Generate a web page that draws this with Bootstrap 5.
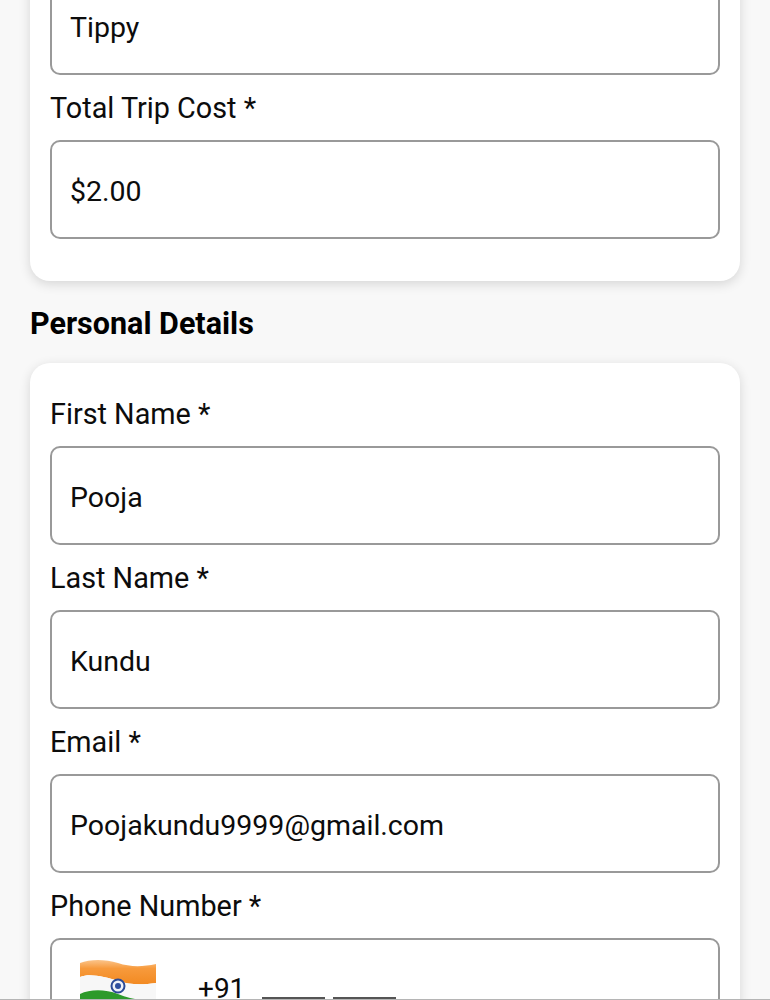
<!DOCTYPE html>
<html lang="en">

<head>
    <meta charset="UTF-8">
    <meta name="viewport" content="width=device-width, initial-scale=1.0">
    <title>Trip Details</title>
    <link rel="stylesheet" href="https://cdn.jsdelivr.net/npm/bootstrap@5.3.0/dist/css/bootstrap.min.css">
    <style>
        html, body {
            height: 1000px;
            overflow: hidden;
        }

        body {
            background-color: #f8f8f8;
            color: #0c0c0c;
            font-family: Roboto, "Liberation Sans", sans-serif;
        }

        /* thin line along the bottom of the screen */
        body::after {
            content: "";
            position: fixed;
            left: 0;
            right: 0;
            bottom: 0;
            height: 1px;
            background-color: #b5b5b5;
        }

        .page-wrap {
            margin-top: -107px;
            padding: 0 30px;
        }

        .form-panel {
            background-color: #fff;
            border-radius: 20px;
            padding: 34px 20px 42px;
            box-shadow: 0 3px 12px rgba(0, 0, 0, 0.14);
        }

        .panel-title {
            font-size: 30.5px;
            font-weight: 700;
            color: #000;
            line-height: 40px;
            margin: 23px 0 19px;
        }

        .field-label {
            display: block;
            font-size: 28.8px;
            line-height: 33px;
            padding-top: 1px;
            margin: 0 0 15px;
        }

        .field-box {
            height: 99px;
            border: 2px solid #999;
            border-radius: 10px;
            padding: 4px 18px 0;
            margin-bottom: 16px;
            font-size: 28.5px;
            color: #0c0c0c;
            box-shadow: none;
        }

        .flag-icon {
            width: 76px;
            height: 62px;
            margin-left: 10px;
            margin-top: 15px;
            flex-shrink: 0;
        }

        .dial-code {
            margin: 28px 0 0 42px;
            line-height: 34px;
            font-size: 28px;
        }

        .num-blank {
            width: 63px;
            height: 3px;
            background-color: #555;
            margin-top: 53px;
        }

        .gap-blank {
            margin-left: 17px;
        }
    </style>
</head>

<body>
    <div class="page-wrap">
        <div class="form-panel">
            <label class="field-label" for="tripName">Trip Name *</label>
            <input type="text" class="form-control field-box" id="tripName" value="Tippy">
            <label class="field-label" for="tripCost">Total Trip Cost *</label>
            <input type="text" class="form-control field-box mb-0" id="tripCost" value="$2.00">
        </div>

        <h2 class="panel-title">Personal Details</h2>

        <div class="form-panel">
            <label class="field-label" for="firstName">First Name *</label>
            <input type="text" class="form-control field-box" id="firstName" value="Pooja">
            <label class="field-label" for="lastName">Last Name *</label>
            <input type="text" class="form-control field-box" id="lastName" value="Kundu">
            <label class="field-label" for="email">Email *</label>
            <input type="text" class="form-control field-box" id="email" value="Poojakundu9999@gmail.com">
            <label class="field-label">Phone Number *</label>
            <div class="field-box d-flex">
                <svg class="flag-icon" viewBox="0 0 76 62">
                    <defs>
                        <linearGradient id="flagOrange" x1="0" y1="0" x2="0" y2="1">
                            <stop offset="0" stop-color="#fbc48a"/>
                            <stop offset="0.35" stop-color="#f79a3c"/>
                            <stop offset="1" stop-color="#f28a22"/>
                        </linearGradient>
                    </defs>
                    <path d="M0 4C10 0 25 0 38 4C50 8 62 8 76 5V24C62 26 50 26 38 22C25 18 10 14 0 18Z" fill="url(#flagOrange)"/>
                    <path d="M0 18C10 14 25 18 38 22C50 26 62 26 76 24V41C62 42 50 40 38 35C25 30 10 30 0 35Z" fill="#f7f7f7"/>
                    <path d="M0 35C10 30 25 30 38 35C50 40 62 42 76 41V62H0Z" fill="#2c9a2a"/>
                    <circle cx="38" cy="27" r="6.5" fill="#eef1f8" stroke="#2b4a96" stroke-width="2"/>
                    <circle cx="38" cy="27" r="3" fill="#2f4f9e"/>
                </svg>
                <span class="dial-code">+91</span>
                <div class="num-blank gap-blank"></div>
                <div class="num-blank ms-2"></div>
            </div>
        </div>
    </div>
    <script src="https://cdn.jsdelivr.net/npm/bootstrap@5.3.0/dist/js/bootstrap.bundle.min.js"></script>
</body>

</html>
